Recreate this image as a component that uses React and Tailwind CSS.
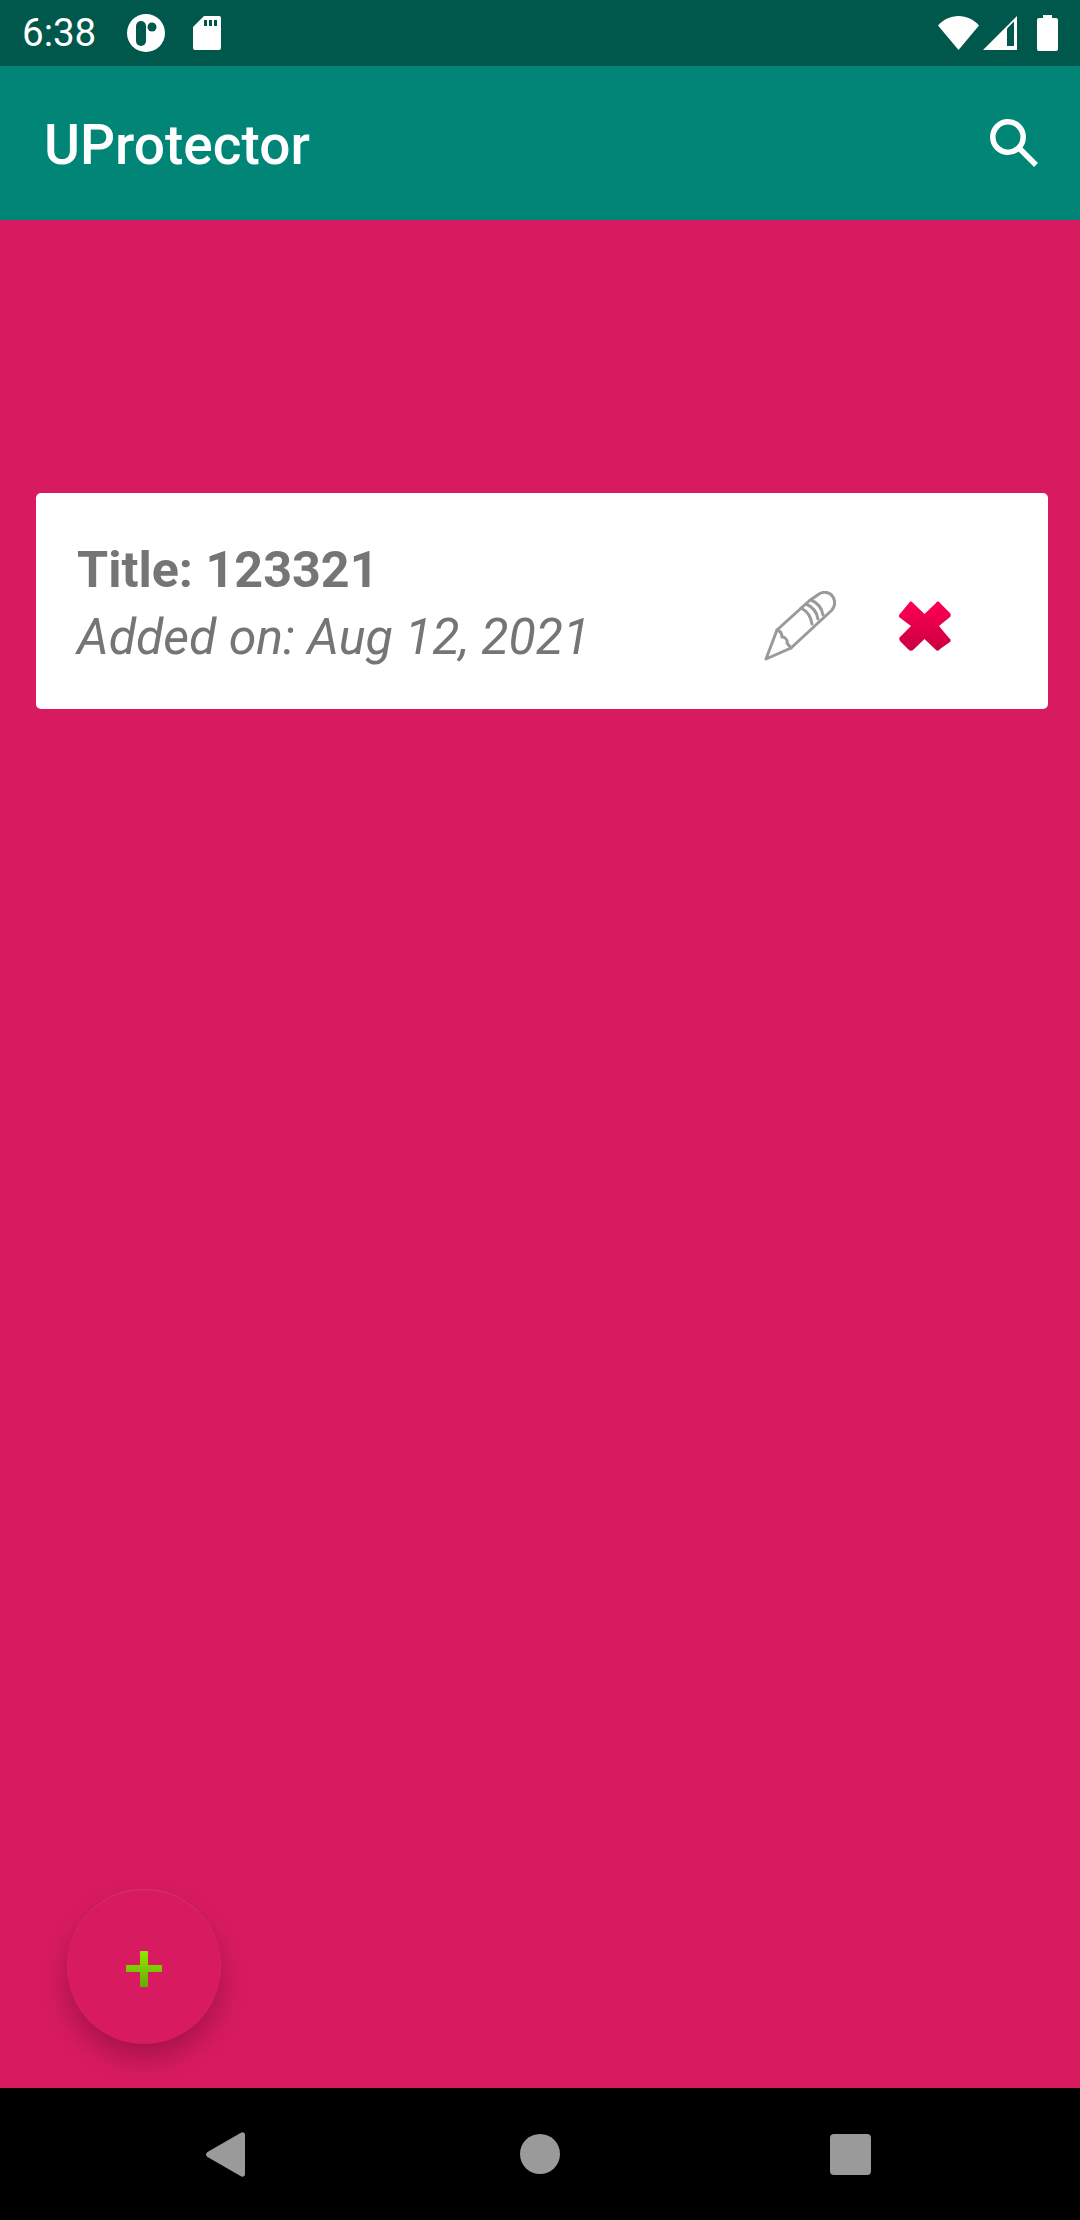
import React from 'react';

const StatusBar = () => (
  <div className="h-[66px] bg-[#00574B] flex items-center pl-[22px] pr-[22px] text-white shrink-0">
    <span className="text-[38.5px] leading-none font-normal">6:38</span>
    <svg className="ml-[31px] w-[38px] h-[38px]" viewBox="0 0 38 38">
      <circle cx="19" cy="19" r="19" fill="#fff" />
      <rect x="9" y="7" width="10" height="25" rx="5" fill="#00574B" />
      <circle cx="25" cy="13" r="4.5" fill="#00574B" />
    </svg>
    <svg className="ml-[28px] w-[28px] h-[34px]" viewBox="0 0 28 34">
      <path d="M11 0H26a2 2 0 0 1 2 2V32a2 2 0 0 1-2 2H2a2 2 0 0 1-2-2V11Z" fill="#fff" />
      <path d="M11 4h3v6h-3ZM16 4h3v6h-3ZM21 4h3v6h-3Z" fill="#00574B" />
    </svg>
    <svg className="ml-auto w-[41px] h-[34px]" viewBox="0 0 41 34">
      <path d="M20.5 34 0 9.5C5.5 3.5 12.5 0 20.5 0S35.5 3.5 41 9.5Z" fill="#fff" />
    </svg>
    <svg className="ml-[4px] w-[34px] h-[34px]" viewBox="0 0 34 34">
      <path d="M0 34 34 0V34Z" fill="#fff" />
      <path d="M24 12.5V30H31V5.5Z" fill="#00574B" />
    </svg>
    <svg className="ml-[20px] w-[21px] h-[36px]" viewBox="0 0 21 36">
      <path d="M6 0H15V3H19a2 2 0 0 1 2 2V34a2 2 0 0 1-2 2H2a2 2 0 0 1-2-2V5a2 2 0 0 1 2-2H6Z" fill="#fff" />
    </svg>
  </div>
);

const AppBar = () => (
  <div className="h-[154px] bg-[#008577] flex items-center pl-[44px] pr-[42px] shrink-0">
    <span className="text-[55px] leading-none font-medium text-white translate-y-[2px]">UProtector</span>
    <svg className="ml-auto w-[48px] h-[48px]" viewBox="0 0 48 48" fill="none" stroke="#fff" strokeWidth="5.5">
      <circle cx="18" cy="18" r="15.2" />
      <path d="M29 29 46 46" />
    </svg>
  </div>
);

const PencilIcon = () => (
  <svg className="w-[72px] h-[70px]" viewBox="0 0 72 70" fill="none" stroke="#9a9a9a" strokeWidth="3" strokeLinejoin="round" strokeLinecap="round">
    <path d="M2 68 13 39 45 10 55 3C60 0 66 1 69 6 72 11 71 15 68 19L27 57Z" />
    <path d="M13 39C16 40 18 42 18 46 21 46 24 49 23 52L27 57" />
    <path d="M37 17C43 20 47 26 48 33" />
    <path d="M42 13C49 16 53 22 54 28" />
    <path d="M47 9C54 12 58 18 59 24" />
  </svg>
);

const CrossIcon = () => (
  <svg className="w-[53px] h-[50px]" viewBox="0 0 53 50">
    <defs>
      <linearGradient id="cross" x1="0" y1="0" x2="0" y2="1">
        <stop offset="0" stopColor="#ff0055" />
        <stop offset="1" stopColor="#c9003f" />
      </linearGradient>
    </defs>
    <path
      d="M1 14 11 2C12 0 14 0 15 2L26.5 13 38 2C39 0 41 0 42 2L52 12C53 14 53 15 52 16L41 25 51 37C53 38 53 40 52 41L42 48C41 50 39 50 38 49L26.5 38 15 49C14 50 12 50 11 49L2 40C1 38 1 37 2 36L13 25 1 16Z"
      fill="url(#cross)"
    />
  </svg>
);

const NoteCard = () => (
  <div className="mt-[273px] ml-[36px] w-[1012px] h-[216px] bg-white rounded-[5px] flex items-center pl-[41px] text-[#757575]">
    <div className="flex flex-col translate-y-[2px]">
      <span className="text-[50.25px] leading-[67px] font-bold">Title: 123321</span>
      <span className="text-[50px] leading-[68px] italic font-normal">Added on: Aug 12, 2021</span>
    </div>
    <div className="ml-auto flex items-center mr-[97px] translate-y-[25px]">
      <PencilIcon />
      <div className="ml-[62px]">
        <CrossIcon />
      </div>
    </div>
  </div>
);

const Fab = () => (
  <div className="absolute left-[67px] bottom-[44px] w-[154px] h-[154px] rounded-full bg-[#D81B60] flex items-center justify-center shadow-[0_14px_28px_rgba(60,0,30,0.32),0_-1px_1px_rgba(255,255,255,0.12)]">
    <svg className="w-[36px] h-[36px] translate-y-[2px]" viewBox="0 0 36 36">
      <defs>
        <linearGradient id="plus" x1="0" y1="0" x2="0" y2="1">
          <stop offset="0" stopColor="#90e800" />
          <stop offset="1" stopColor="#66aa00" />
        </linearGradient>
      </defs>
      <path
        d="M14 1a1 1 0 0 1 1-1h6a1 1 0 0 1 1 1V14H35a1 1 0 0 1 1 1v5a1 1 0 0 1-1 1H22V35a1 1 0 0 1-1 1H15a1 1 0 0 1-1-1V21H1a1 1 0 0 1-1-1V15a1 1 0 0 1 1-1H14Z"
        fill="url(#plus)"
      />
    </svg>
  </div>
);

const NavBar = () => (
  <div className="h-[132px] bg-black flex items-center pl-[206px] shrink-0">
    <svg className="w-[39px] h-[45px]" viewBox="0 0 39 45">
      <path d="M34.5 1 C36.5 -.5 39 .5 39 3V42C39 44.5 36.5 45.5 34.5 44L1.5 25C-.5 23.5 -.5 21.5 1.5 20Z" fill="#9a9a9a" />
    </svg>
    <div className="ml-[275px] w-[40px] h-[40px] rounded-full bg-[#9a9a9a]" />
    <div className="ml-[270px] w-[41px] h-[41px] rounded-[4px] bg-[#9a9a9a]" />
  </div>
);

export default function App() {
  return (
    <div className="h-[2220px] w-[1080px] flex flex-col overflow-hidden" style={{ fontFamily: 'Roboto, sans-serif' }}>
      <StatusBar />
      <AppBar />
      <div className="relative flex-1 bg-[#D81B60]">
        <NoteCard />
        <Fab />
      </div>
      <NavBar />
    </div>
  );
}
